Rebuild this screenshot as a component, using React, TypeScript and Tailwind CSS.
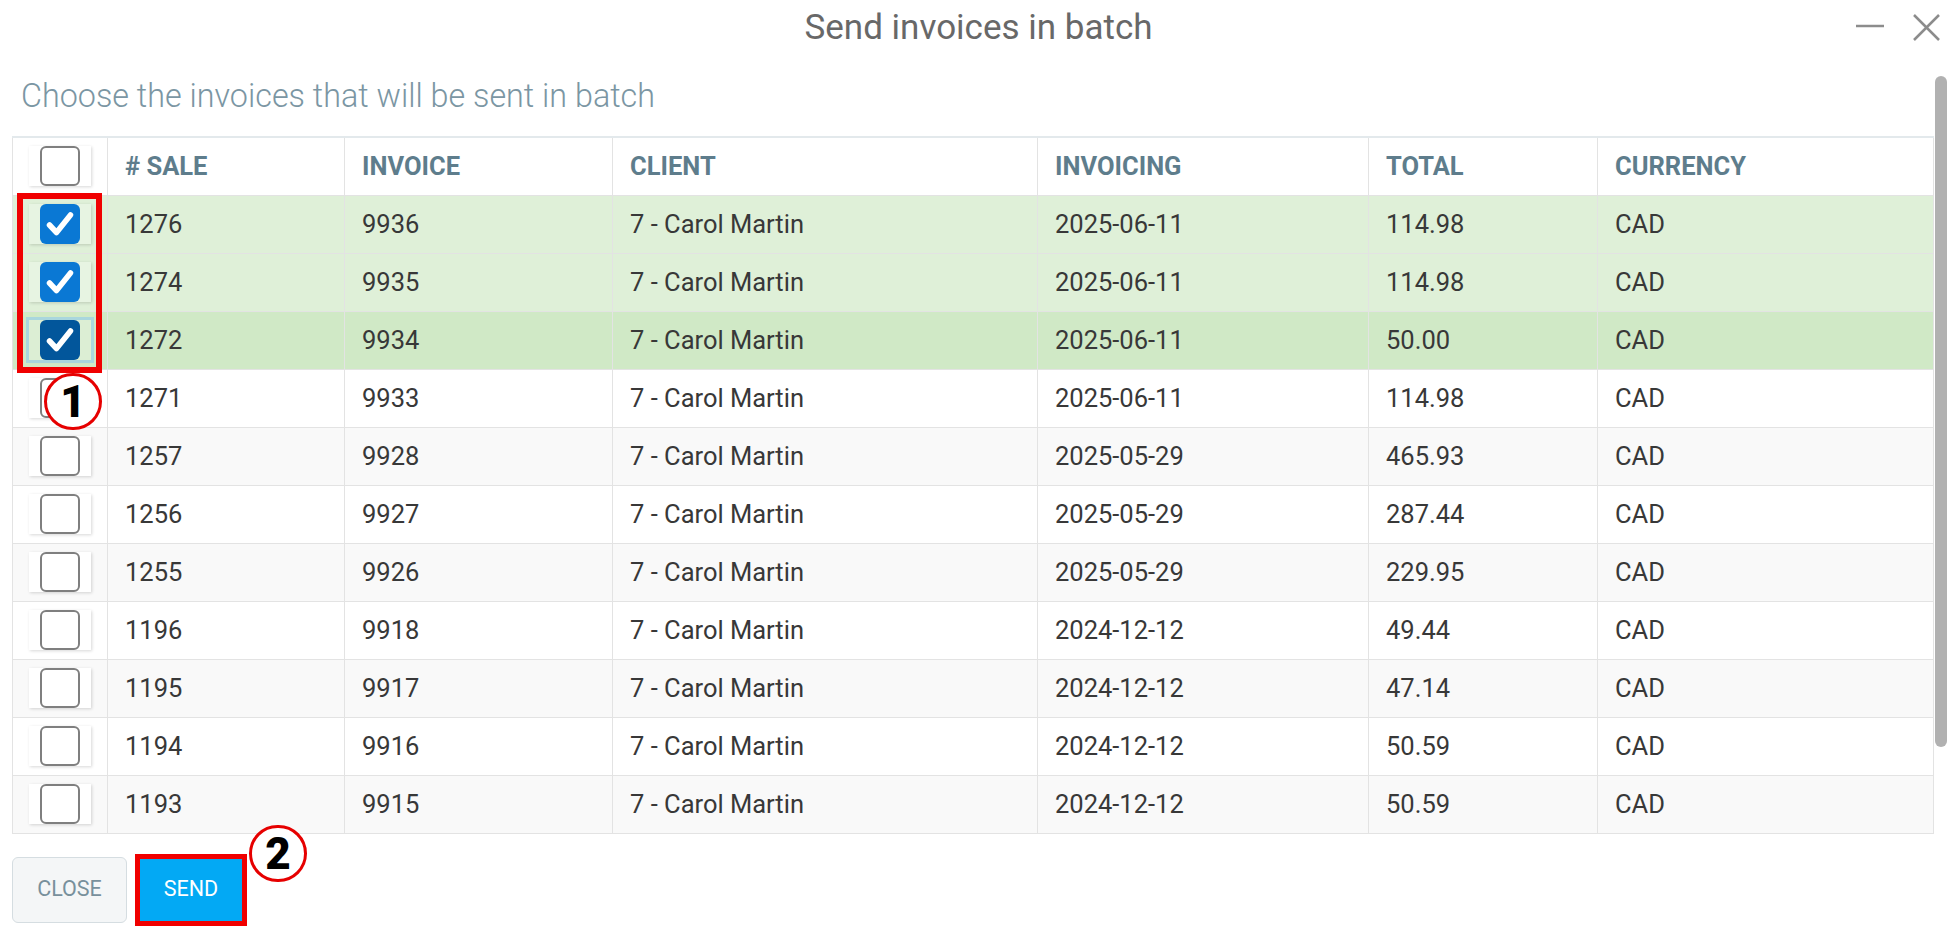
const rows = [
  { sale: '1276', invoice: '9936', date: '2025-06-11', total: '114.98', checked: true },
  { sale: '1274', invoice: '9935', date: '2025-06-11', total: '114.98', checked: true },
  { sale: '1272', invoice: '9934', date: '2025-06-11', total: '50.00', checked: true, focused: true },
  { sale: '1271', invoice: '9933', date: '2025-06-11', total: '114.98' },
  { sale: '1257', invoice: '9928', date: '2025-05-29', total: '465.93' },
  { sale: '1256', invoice: '9927', date: '2025-05-29', total: '287.44' },
  { sale: '1255', invoice: '9926', date: '2025-05-29', total: '229.95' },
  { sale: '1196', invoice: '9918', date: '2024-12-12', total: '49.44' },
  { sale: '1195', invoice: '9917', date: '2024-12-12', total: '47.14' },
  { sale: '1194', invoice: '9916', date: '2024-12-12', total: '50.59' },
  { sale: '1193', invoice: '9915', date: '2024-12-12', total: '50.59' },
]

const cols = ['# SALE', 'INVOICE', 'CLIENT', 'INVOICING', 'TOTAL', 'CURRENCY']

function Box({ checked, focused }: { checked?: boolean; focused?: boolean }) {
  return (
    <div
      className={`mx-auto flex h-[40px] w-[62px] items-center justify-center shadow-[1px_1px_3px_rgba(0,0,0,0.16)] ${
        focused ? 'ring-[3px] ring-[#a9d6dd]' : ''
      } ${checked ? 'bg-white/25' : 'bg-white'}`}
    >
      <div
        className={`h-[40px] w-[40px] rounded-[6px] ${
          checked ? (focused ? 'bg-[#02569b]' : 'bg-[#0a78d4]') : 'border-2 border-[#7f7f7f] bg-white'
        }`}
      >
        {checked && (
          <svg viewBox="0 0 40 40" className="h-full w-full">
            <path d="M9.5 21 L16.5 28.5 L30.5 11" fill="none" stroke="white" strokeWidth="5.5" strokeLinecap="round" strokeLinejoin="round" />
          </svg>
        )}
      </div>
    </div>
  )
}

function Marker({ n, className }: { n: string; className: string }) {
  return (
    <div
      className={`absolute flex h-[57px] w-[58px] items-center justify-center rounded-full border-[3px] border-[#e60000] bg-white text-[44px] font-black leading-none text-black ${className}`}
    >
      {n}
    </div>
  )
}

export default function App() {
  return (
    <div className="relative h-[927px] w-[1947px] overflow-hidden bg-white font-['Roboto','Liberation_Sans',sans-serif]">
      {/* title bar */}
      <div className="flex h-[54px] items-center">
        <div className="flex-1"></div>
        <div className="pl-[17px] text-[35px] leading-none text-[#686868]">Send invoices in batch</div>
        <div className="flex flex-1 items-center justify-end gap-[29px] pr-[7px]">
          <svg width="28" height="28" viewBox="0 0 28 28" className="mt-[-4px]">
            <line x1="0" y1="15" x2="28" y2="15" stroke="#8c8c8c" strokeWidth="2.5" />
          </svg>
          <svg width="27" height="27" viewBox="0 0 27 27" className="mt-[1px]">
            <line x1="1" y1="1" x2="26" y2="26" stroke="#8c8c8c" strokeWidth="2.5" />
            <line x1="26" y1="1" x2="1" y2="26" stroke="#8c8c8c" strokeWidth="2.5" />
          </svg>
        </div>
      </div>

      <div className="flex">
        <div className="w-[1933px]">
          <div className="mt-[22px] h-[40px] pl-[21px] text-[32.3px] font-light leading-[40px] text-[#7b96a3]">
            Choose the invoices that will be sent in batch
          </div>

          <table className="ml-[12px] mt-[20px] w-[1921px] table-fixed border-collapse text-[25.5px]">
            <colgroup>
              <col className="w-[95px]" />
              <col className="w-[237px]" />
              <col className="w-[268px]" />
              <col className="w-[425px]" />
              <col className="w-[331px]" />
              <col className="w-[229px]" />
              <col className="w-[336px]" />
            </colgroup>
            <thead>
              <tr className="h-[58px] border-t-2 border-[#e3e9ec] bg-white">
                <th className="border border-[#e3e3e3] p-0">
                  <Box />
                </th>
                {cols.map((c) => (
                  <th key={c} className="border border-[#e3e3e3] pl-[17px] text-left font-bold text-[#5e7d8c]">
                    {c}
                  </th>
                ))}
              </tr>
            </thead>
            <tbody>
              {rows.map((r, i) => {
                const bg = r.focused
                  ? 'bg-[#d0e9c6]'
                  : r.checked
                  ? 'bg-[#dff0d8]'
                  : i % 2 === 0
                  ? 'bg-[#f9f9f9]'
                  : 'bg-white'
                return (
                  <tr key={r.sale} className={`h-[58px] text-[#383838] ${bg}`}>
                    <td className="border border-[#e3e3e3] p-0">
                      <Box checked={r.checked} focused={r.focused} />
                    </td>
                    <td className="border border-[#e3e3e3] pl-[17px]">{r.sale}</td>
                    <td className="border border-[#e3e3e3] pl-[17px]">{r.invoice}</td>
                    <td className="border border-[#e3e3e3] pl-[17px]">7 - Carol Martin</td>
                    <td className="border border-[#e3e3e3] pl-[17px]">{r.date}</td>
                    <td className="border border-[#e3e3e3] pl-[17px]">{r.total}</td>
                    <td className="border border-[#e3e3e3] pl-[17px]">CAD</td>
                  </tr>
                )
              })}
            </tbody>
          </table>

          <div className="ml-[12px] mt-[23px] flex">
            <button className="h-[66px] w-[115px] rounded-[6px] border border-[#d5dde1] bg-[#f4f6f7] text-[21.5px] text-[#78909c]">
              CLOSE
            </button>
            <button className="relative ml-[11px] h-[66px] w-[106px] bg-[#03a9f4] text-[21.5px] text-white">
              SEND
              <span className="absolute -inset-[3px] border-[5px] border-[#f00000]"></span>
            </button>
          </div>
        </div>

        {/* scrollbar */}
        <div className="w-[14px]">
          <div className="ml-[2px] mt-[22px] h-[671px] w-[12px] rounded-[6px] bg-[#b1b1b1]"></div>
        </div>
      </div>

      {/* annotations */}
      <div className="absolute left-[17px] top-[193px] h-[180px] w-[85px] border-[6px] border-[#f00000]"></div>
      <Marker n="1" className="left-[44px] top-[373px]" />
      <Marker n="2" className="left-[249px] top-[825px]" />
    </div>
  )
}
